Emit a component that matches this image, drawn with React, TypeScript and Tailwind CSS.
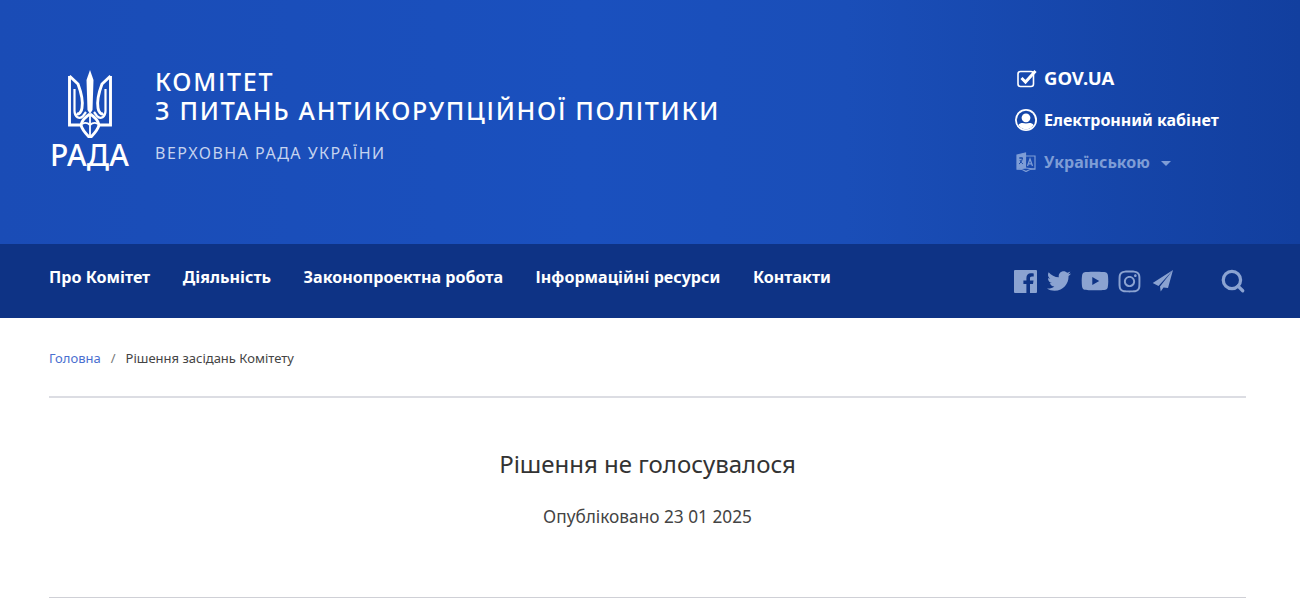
// App.tsx
// Committee page: blue header, nav bar, breadcrumb and decision text

import { Search } from 'lucide-react';
import { FaTwitter, FaYoutube, FaInstagram } from 'react-icons/fa';

const navItems = ['Про Комітет', 'Діяльність', 'Законопроектна робота', 'Інформаційні ресурси', 'Контакти'];

function TridentHalf() {
  return (
    <>
      <path d="M1.5 6 L10 14 C13 22 15.5 30 14 38 C13.5 42 11 45 8.5 43.5" />
      <path d="M1.5 6 V55 H13" />
      <path d="M6.5 19 V41 C6.5 47 11.5 50 15 46 L18 42" strokeWidth="2.2" />
      <path d="M13 55 C14 50 17 47 22 44" />
      <path d="M13 55 C14 60 18 64 22 68" />
      <path d="M14 54 C17 52 20 53 22 55" strokeWidth="1.8" />
    </>
  );
}

function Trident() {
  return (
    <svg width="44" height="68" viewBox="0 0 44 68" fill="none" stroke="white" strokeWidth="2.9" strokeLinejoin="miter">
      <path d="M22 0 L25.5 10 L24.5 40 L22 44 L19.5 40 L18.5 10 Z" fill="white" stroke="none" />
      <path d="M22 44 V67" strokeWidth="1.8" />
      <TridentHalf />
      <g transform="matrix(-1 0 0 1 44 0)">
        <TridentHalf />
      </g>
    </svg>
  );
}

function LanguageIcon() {
  return (
    <svg className="shrink-0" width="20" height="20" viewBox="0 0 20 20" fill="none" stroke="currentColor" strokeWidth="1.2">
      <path d="M1 3 L9.5 1 L9.5 16 L1 17 Z" fill="currentColor" />
      <path d="M9.5 4 L19 4 L19 17 L9.5 16" />
      <path d="M1 17 C5 17 8 18 10 19.5 C12 18 15 17 19 17" />
      <path d="M11.5 14 L14 7 L16.5 14 M12.5 11.8 L15.5 11.8" strokeWidth="1.3" />
      <path d="M3 6 L7 6 M5 5 L5 7 M6.5 6 C6 9 4.5 11 3 12 M4 8 C4.5 10 6 11 7 12" stroke="#1546a8" strokeWidth="1" />
    </svg>
  );
}

export default function App() {
  return (
    <div className="min-h-[615px] bg-white font-['Noto_Sans',sans-serif] overflow-hidden">
      <header className="h-[244px] bg-[linear-gradient(90deg,#1a4cb6_0%,#1a50be_45%,#1a4eb8_65%,#123f9f_100%)] pl-[50px] pr-[82px] flex justify-between text-white">
        <div className="flex pt-[70px]">
          <div className="w-[79px] flex flex-col items-center">
            <Trident />
            <div className="text-[30px] leading-[30px] font-medium tracking-[0.2px] mt-[2px]">РАДА</div>
          </div>
          <div className="ml-[26px]">
            <div className="text-[25px] leading-[29.5px] font-medium tracking-[1.72px] mt-[-3.5px]">
              КОМІТЕТ
              <br />З ПИТАНЬ АНТИКОРУПЦІЙНОЇ ПОЛІТИКИ
            </div>
            <div className="text-[16px] leading-[22px] tracking-[1.5px] text-[#c5d3ef] mt-[16.5px]">ВЕРХОВНА РАДА УКРАЇНИ</div>
          </div>
        </div>
        <div className="w-[202px] pt-[64px] flex flex-col gap-[14px] font-bold text-[16px] leading-[28px]">
          <div className="flex items-center gap-[7px] ml-[1px]">
            <svg className="shrink-0" width="20" height="20" viewBox="0 0 20 20" fill="none">
              <rect x="1" y="3.5" width="15.5" height="15" rx="2.5" stroke="white" strokeWidth="1.6" />
              <path d="M4.5 10 L8.5 14 L18.5 3" stroke="white" strokeWidth="3" />
            </svg>
            <span className="text-[18.5px]">GOV.UA</span>
          </div>
          <div className="flex items-center gap-[7px] ml-[-1px]">
            <svg className="shrink-0" width="22" height="22" viewBox="0 0 22 22">
              <circle cx="11" cy="11" r="11" fill="white" />
              <circle cx="11" cy="11" r="9.2" fill="#1546a8" />
              <circle cx="11" cy="8.8" r="4.4" fill="white" />
              <path d="M3.4 16 C5 13.6 8 13.6 11 14.6 C14 13.6 17 13.6 18.6 16 C16.8 18.8 14 20.2 11 20.2 C8 20.2 5.2 18.8 3.4 16 Z" fill="white" />
            </svg>
            <span className="whitespace-nowrap">Електронний кабінет</span>
          </div>
          <div className="flex items-center gap-2 text-[#7e9dd6]">
            <LanguageIcon />
            <span>Українською</span>
            <span className="ml-[3px] mt-[2px] w-0 h-0 border-x-[5px] border-x-transparent border-t-[5px] border-t-[#7e9dd6]" />
          </div>
        </div>
      </header>

      <nav className="h-[74px] bg-[#0e3385] pl-[49px] pr-[54px] flex items-center justify-between">
        <ul className="flex gap-[32.5px] text-white font-bold text-[16.1px] mt-[-7px]">
          {navItems.map((item) => (
            <li key={item} className="whitespace-nowrap">
              {item}
            </li>
          ))}
        </ul>
        <div className="flex items-center text-[#8ba3d1]">
          <svg className="w-[23px] h-[23px]" viewBox="0 0 23 23">
            <path
              fill="currentColor"
              d="M1 0 H22 a1 1 0 0 1 1 1 V22 a1 1 0 0 1 -1 1 H16 V14 H19 L19.5 10.5 H16 V8.5 C16 7.3 16.4 6.6 18 6.6 H19.7 V3.4 C19 3.3 18 3.2 16.8 3.2 C14.2 3.2 12.4 4.8 12.4 7.9 V10.5 H9.4 V14 H12.4 V23 H1 a1 1 0 0 1 -1 -1 V1 a1 1 0 0 1 1 -1 Z"
            />
          </svg>
          <FaTwitter className="w-[24px] h-[24px] ml-[10px]" />
          <FaYoutube className="w-[28px] h-[28px] ml-[10px]" />
          <FaInstagram className="w-[25px] h-[25px] ml-[8px]" />
          <svg className="w-[23px] h-[23px] ml-[9px]" viewBox="0 0 23 23">
            <path fill="currentColor" d="M22 0 L1.7 13 L7.5 16 Z M22 0 L9 16.5 L9.7 21.5 L12.5 17.5 L17 18 Z" />
          </svg>
          <Search className="w-[26px] h-[26px] ml-[46px]" strokeWidth={3} />
        </div>
      </nav>

      <main className="px-[49px] pr-[54px]">
        <div className="pt-[31px] pb-[28px] border-b-2 border-[#dcdde3] text-[13px] leading-[19px] flex">
          <span className="text-[#4a6fd0]">Головна</span>
          <span className="text-[#777] mx-[10px]">/</span>
          <span className="text-[#444]">Рішення засідань Комітету</span>
        </div>
        <div className="text-center text-[#333]">
          <h1 className="mt-[49px] text-[24px] leading-[34px]">Рішення не голосувалося</h1>
          <p className="mt-[23px] text-[17.25px] leading-[26px] text-[#444]">Опубліковано 23 01 2025</p>
        </div>
        <div className="mt-[67px] border-b border-[#cfd0d6]" />
      </main>
    </div>
  );
}
